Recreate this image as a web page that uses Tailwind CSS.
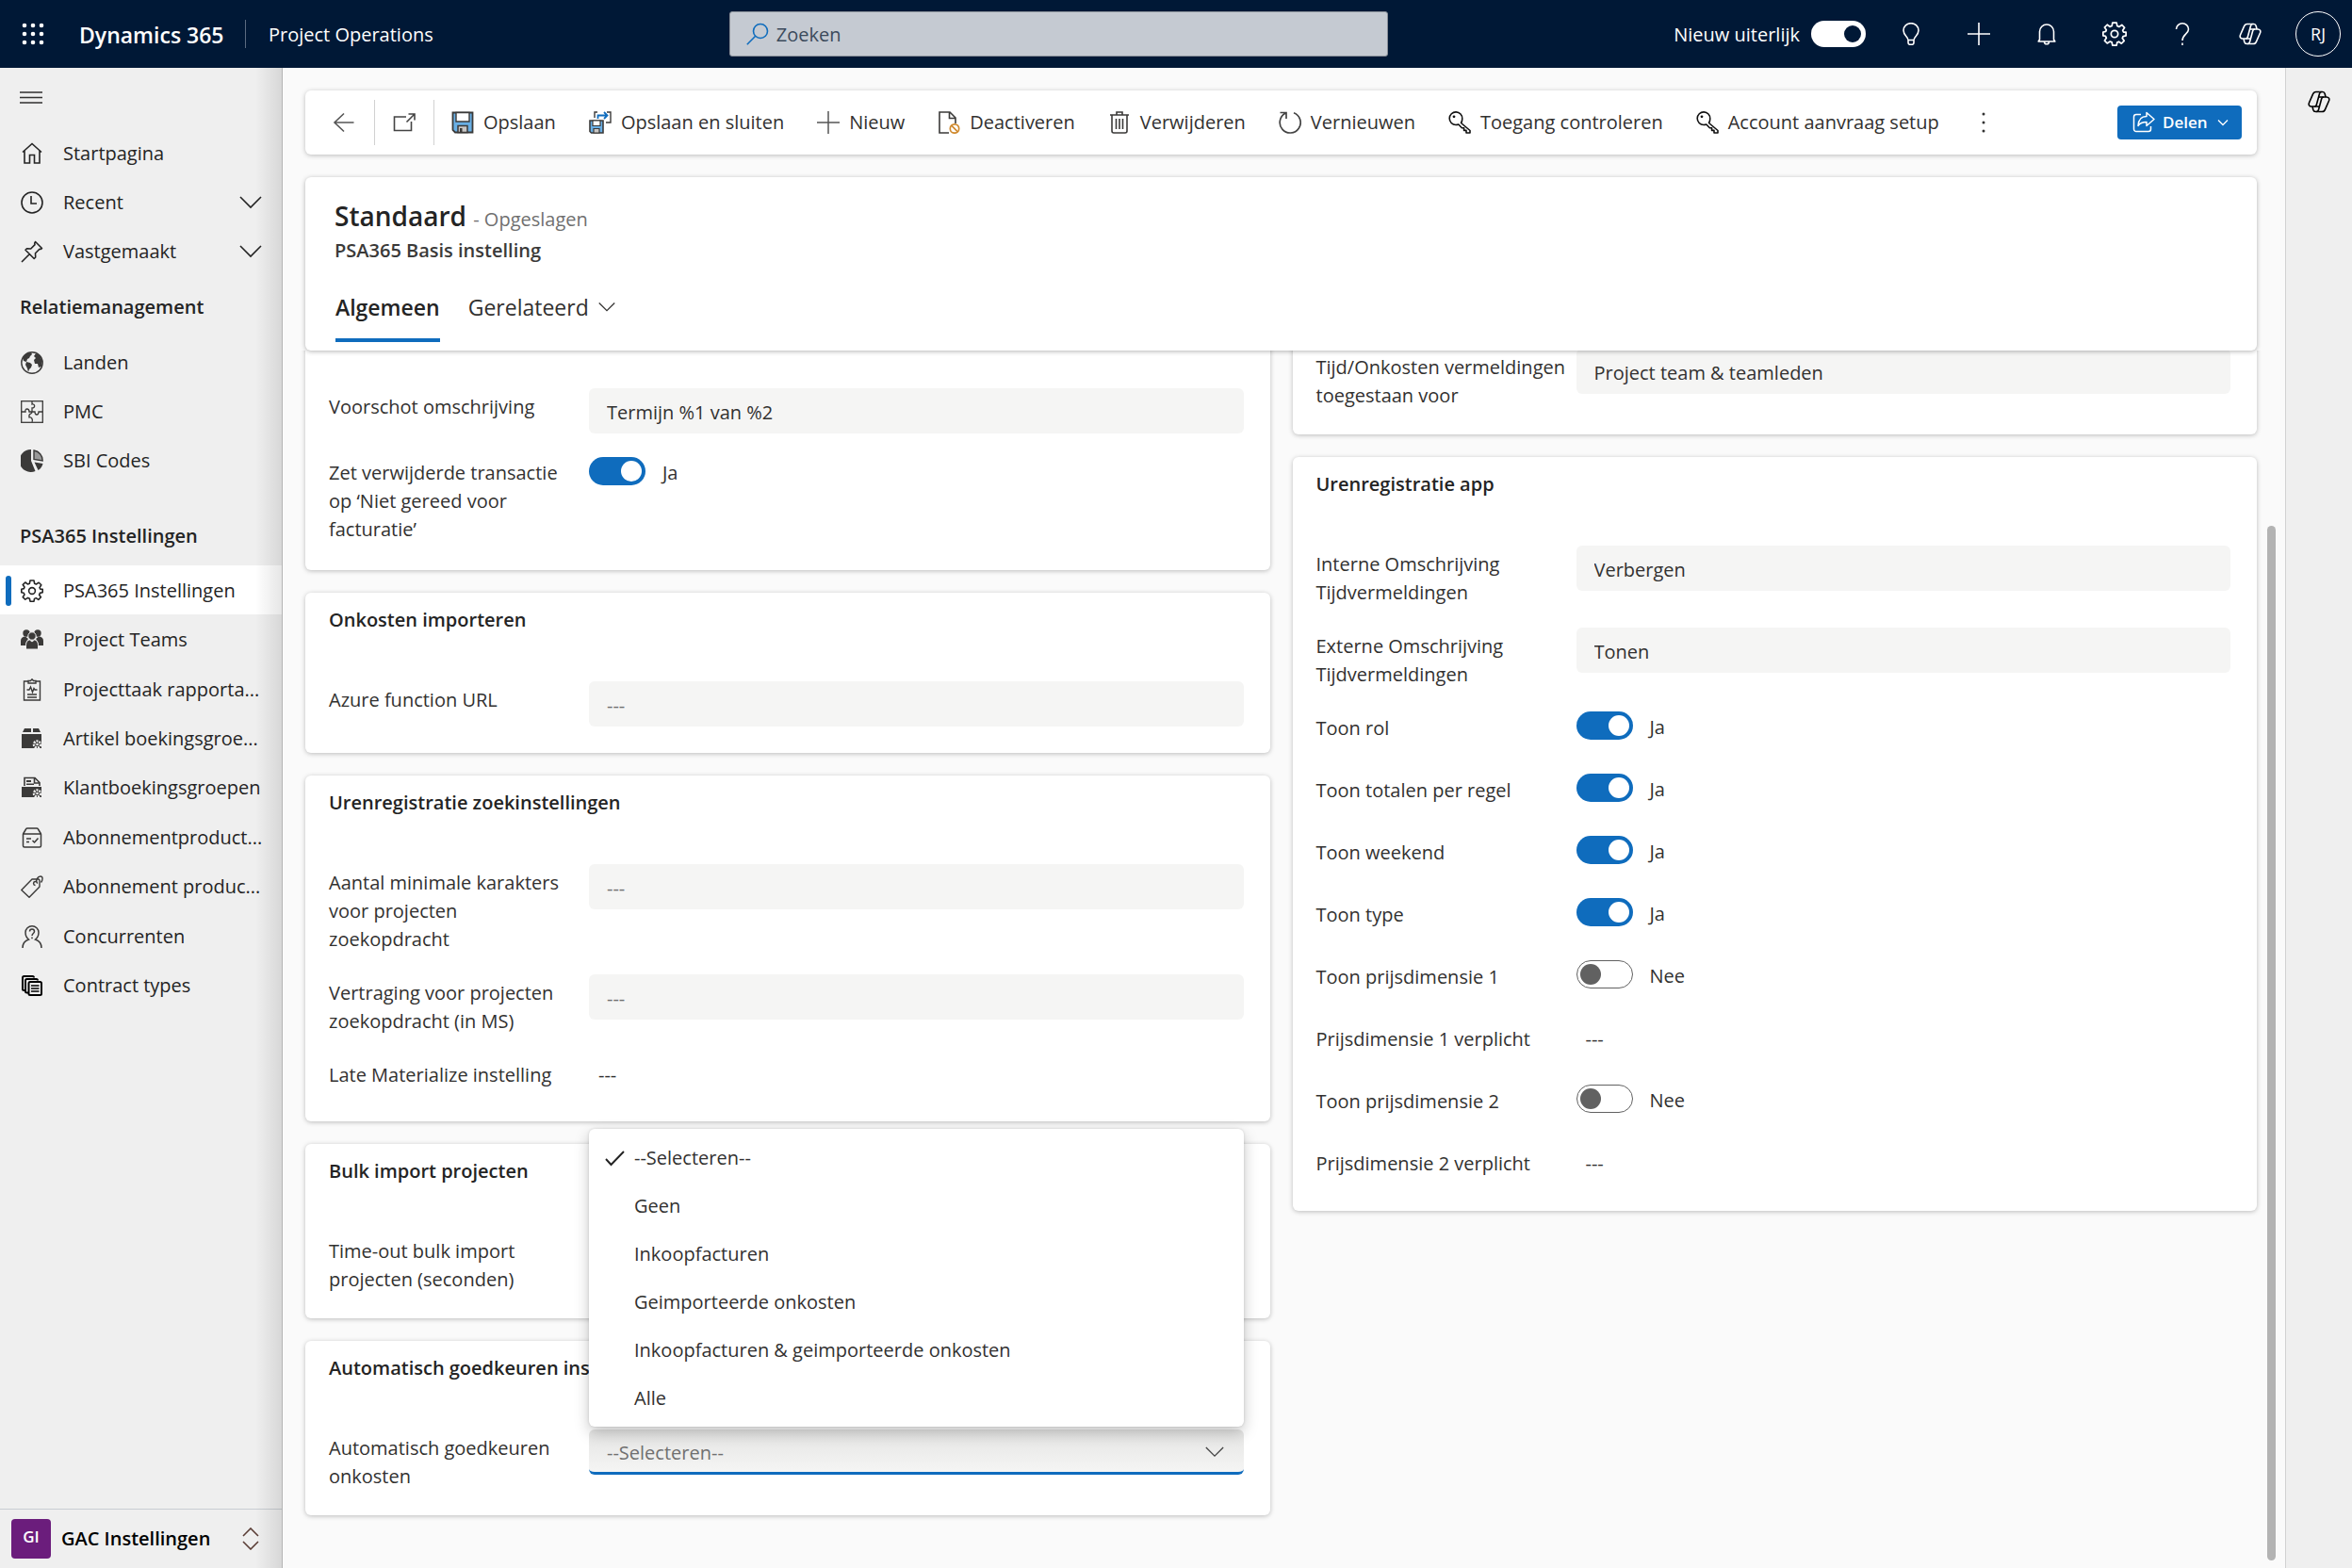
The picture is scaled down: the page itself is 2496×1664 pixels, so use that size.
<!DOCTYPE html>
<html lang="nl">
<head>
<meta charset="utf-8">
<title>PSA365 Basis instelling - Dynamics 365</title>
<script src="https://cdn.jsdelivr.net/npm/@tailwindcss/browser@4"></script>
</head>
<body class="flex h-screen flex-col overflow-hidden bg-[#fafafa] font-['Open_Sans','Noto_Sans',sans-serif] text-[20px] leading-[30px] text-[#323130]">

<svg class="hidden" aria-hidden="true">
  <defs>
    <symbol id="chev" viewBox="0 0 24 24"><path d="M1 6l11 11L23 6" fill="none" stroke="currentColor" stroke-width="1.6"/></symbol>
    <symbol id="gear" viewBox="0 0 24 24"><g fill="none" stroke="currentColor" stroke-width="1.6" stroke-linejoin="round"><path d="M10 1h4l.6 3.2 1.8.8L19.200 3.200l2.600 2.600-1.800 2.800.8 1.600L23.200 10.200v3.600l-2.800.600-.8 1.800 1.800 2.600-2.600 2.600-2.600-1.800-1.700.8L14 23.200h-4l-.6-3-1.800-.8-2.800 1.800-2.600-2.600L4 16l-.8-1.800L.8 13.800v-3.600l2.600-.600L4 8 2.200 5.600l2.600-2.600L7.400 4.900l2-.7z"/><circle cx="12" cy="12" r="3.400"/></g></symbol>
    <symbol id="copilot" viewBox="0 0 24 24"><g fill="none" stroke="currentColor" stroke-width="1.600" stroke-linejoin="round"><path d="M12.500 1.500H8.800C7.200 1.500 6.100 2.300 5.500 3.900L1.500 13c-.9 2.300.2 4 2.500 4h3c1.300 0 2-.6 2.300-1.800L12.500 3.500c.3-1.200 1-2 2.200-2"/><path d="M12.500 1.500h3.300c1.300 0 2 .7 2.400 2L19 7"/><path d="M11.500 22.500h3.700c1.600 0 2.700-.8 3.300-2.400l4-9.100c.9-2.300-.2-4-2.500-4h-3c-1.300 0-2 .6-2.300 1.800L11.500 20.500c-.3 1.200-1 2-2.200 2"/><path d="M11.500 22.500H8.200c-1.300 0-2-.7-2.400-2L5 17M17 7h-5.300M7 17h5.300"/></g></symbol>
    <symbol id="key" viewBox="0 0 24 24"><g fill="none" stroke="#111" stroke-width="1.600" stroke-linejoin="round"><path d="M13.500 12.500l9.500 8V23h-4v-2.600h-2.400v-2.600h-2.200L10.800 14C9.900 14.400 9 14.500 8 14.500A6.800 6.800 0 1 1 14.800 8c0 1.700-.5 3.200-1.300 4.500z"/></g><circle cx="6" cy="5.800" r="1.400" fill="#111"/></symbol>
  </defs>
</svg>

<header class="relative flex h-[72px] shrink-0 items-center bg-[#001836] text-white">
  <button class="ml-[23px] size-6" aria-label="Apps">
    <svg viewBox="0 0 24 24" fill="currentColor"><circle cx="3" cy="3" r="2.300"/><circle cx="12" cy="3" r="2.300"/><circle cx="21" cy="3" r="2.300"/><circle cx="3" cy="12" r="2.300"/><circle cx="12" cy="12" r="2.300"/><circle cx="21" cy="12" r="2.300"/><circle cx="3" cy="21" r="2.300"/><circle cx="12" cy="21" r="2.300"/><circle cx="21" cy="21" r="2.300"/></svg>
  </button>
  <a href="#" class="ml-[37px] w-[176px] pt-0.5 text-[23px] font-semibold whitespace-nowrap">Dynamics 365</a>
  <a href="#" class="flex h-[30px] items-center border-l border-[#5b6b80] pt-0.5 pl-6 whitespace-nowrap">Project Operations</a>
  <label class="absolute left-[31%] flex h-12 w-[28%] items-center gap-2 rounded-[3px] border border-[#8a8f98] bg-[#c5cad2] px-[17px] text-[#33475c]">
    <svg class="size-6 shrink-0" viewBox="0 0 24 24" fill="none" stroke="#0f6cbd" stroke-width="1.600"><circle cx="15" cy="9" r="7.500"/><path d="M9.700 14.300L.8 23.200"/></svg>
    <input type="search" aria-label="Zoeken" placeholder="Zoeken" class="min-w-0 flex-1 bg-transparent pt-0.5 outline-none placeholder:text-[#3b4a5c]">
  </label>
  <div class="ml-auto flex items-center pr-3">
    <label for="look" class="pt-0.5 pr-3 whitespace-nowrap">Nieuw uiterlijk</label>
    <input id="look" type="checkbox" checked class="relative h-7 w-[58px] appearance-none rounded-full bg-white before:absolute before:top-[5px] before:right-[5px] before:size-[18px] before:rounded-full before:bg-[#001836] before:content-['']">
    <div class="ml-3 flex">
      <button class="grid h-12 w-[72px] place-items-center" aria-label="Ideeën"><svg class="size-6" viewBox="0 0 24 24" fill="none" stroke="currentColor" stroke-width="1.600"><path d="M9 18.500c0-3.500-5-5-5-10.200a8 7.600 0 0 1 16 0c0 5.200-5 6.700-5 10.200zM9 18.500v2.800c0 1.200.8 2 2 2h2c1.200 0 2-.8 2-2v-2.800"/></svg></button>
      <button class="grid h-12 w-[72px] place-items-center" aria-label="Toevoegen"><svg class="size-6" viewBox="0 0 24 24" fill="none" stroke="currentColor" stroke-width="1.600"><path d="M12 0v24M0 12h24"/></svg></button>
      <button class="grid h-12 w-[72px] place-items-center" aria-label="Meldingen"><svg class="size-6" viewBox="0 0 24 24" fill="none" stroke="currentColor" stroke-width="1.600" stroke-linejoin="round"><path d="M4.500 18V9.500a7.500 7.500 0 0 1 15 0V18l1.300 2H3.200zM9.500 20.500a2.500 2.300 0 0 0 5 0"/></svg></button>
      <button class="grid h-12 w-[72px] place-items-center" aria-label="Instellingen"><svg class="size-[26px]"><use href="#gear"/></svg></button>
      <button class="grid h-12 w-[72px] place-items-center" aria-label="Help"><svg class="size-6" viewBox="0 0 24 24" fill="none" stroke="currentColor" stroke-width="1.600"><path d="M5.500 7a6.500 6.200 0 0 1 13 0c0 5-6.500 5.500-6.500 12M12 21.500V24"/></svg></button>
      <button class="grid h-12 w-[72px] place-items-center" aria-label="Copilot"><svg class="size-6"><use href="#copilot"/></svg></button>
    </div>
    <button class="ml-3 grid size-12 place-items-center rounded-full border border-white text-[18px]">RJ</button>
  </div>
</header>

<div class="flex min-h-0 flex-1">
  <nav class="relative flex w-[300px] shrink-0 flex-col border-r border-[#b4b4b4] bg-[#efefef] text-[#242424]">
    <div class="pointer-events-none absolute inset-y-0 right-0 z-10 w-7 bg-linear-to-r from-transparent to-black/10"></div>
    <button class="flex h-16 items-center pl-[21px]" aria-label="Menu"><svg class="size-6" viewBox="0 0 24 24" stroke="#323130" stroke-width="1.500"><path d="M0 6h24M0 11.500h24M0 17h24"/></svg></button>

    <ul class="grid h-[157px] auto-rows-fr">
      <li><a href="#" class="flex h-full items-center gap-[21px] pt-px pl-[22px]"><svg class="size-6 shrink-0" viewBox="0 0 24 24" fill="none" stroke="currentColor" stroke-width="1.600"><path d="M2 10.500L12 1.500l10 9M4 9v13h5.500v-8.500h5V22H20V9"/></svg>Startpagina</a></li>
      <li><button class="flex h-full w-full items-center gap-[21px] pt-px pl-[22px]"><svg class="size-6 shrink-0" viewBox="0 0 24 24" fill="none" stroke="currentColor" stroke-width="1.600"><circle cx="12" cy="12" r="11"/><path d="M11 5v8h6"/></svg>Recent<svg class="mr-[21px] ml-auto size-6"><use href="#chev"/></svg></button></li>
      <li><button class="flex h-full w-full items-center gap-[21px] pt-px pl-[22px]"><svg class="size-6 shrink-0" viewBox="0 0 24 24" fill="none" stroke="currentColor" stroke-width="1.600" stroke-linejoin="round"><path d="M15.500 1.500l7 7-1.500 1-1-.2-4.500 4.500.2 4.200-1.500 1.500L5 10.300l1.500-1.500 4.200.2L15 4.600l-.3-1.500zM9.500 14.500L1 23"/></svg>Vastgemaakt<svg class="mr-[21px] ml-auto size-6"><use href="#chev"/></svg></button></li>
    </ul>

    <h2 class="flex h-[65px] items-center pl-[21px] font-semibold">Relatiemanagement</h2>
    <ul class="grid h-[157px] auto-rows-fr">
      <li><a href="#" class="flex h-full items-center gap-[21px] pt-px pl-[22px]"><svg class="size-6 shrink-0" viewBox="0 0 24 24"><circle cx="12" cy="12" r="11.200" fill="none" stroke="#3b3a39" stroke-width="1.400"/><path fill="#3b3a39" d="M2 7c2-4 5-6 9-6l1 2-2 2-1 2-2 1-1 3-3-1zM6 11l4 1 2 2-1 3-2 2-1 3-1-4-2-4zM14 5l2-3 4 2 3 6-1 6-3 1-1-4-3 0-1-4 2-2z"/></svg>Landen</a></li>
      <li><a href="#" class="flex h-full items-center gap-[21px] pt-px pl-[22px]"><svg class="size-6 shrink-0" viewBox="0 0 24 24" fill="none" stroke="#3b3a39" stroke-width="1.300"><rect x=".7" y=".7" width="22.600" height="22.600"/><path d="M12 1v3c3-1 4 4 0 4v4c0 4-4 0-3 6 3-1 4 3 3 5M1 12h4c-1-4 4-4 4 0h6c0 4 4 4 4 0h4"/></svg>PMC</a></li>
      <li><a href="#" class="flex h-full items-center gap-[21px] pt-px pl-[22px]"><svg class="size-6 shrink-0" viewBox="0 0 24 24" fill="#3b3a39"><path d="M11 0v12l4.500 11A12 12 0 1 1 11 0z"/><path d="M14 1a11 11 0 0 1 9.200 11L14 10.500z" fill="#999" stroke="#3b3a39" stroke-width="1.400"/><path d="M14.500 13.500l9 1.500a11 11 0 0 1-5 7z"/></svg>SBI Codes</a></li>
    </ul>

    <h2 class="flex h-[85px] items-center pt-[23px] pl-[21px] font-semibold">PSA365 Instellingen</h2>
    <ul class="grid h-[472px] auto-rows-fr">
      <li><a href="#" aria-current="page" class="relative flex h-full items-center gap-[21px] bg-white pt-px pl-[22px] before:absolute before:left-1.5 before:h-8 before:w-1.5 before:rounded-sm before:bg-[#0f6cbd] before:content-['']"><svg class="size-6 shrink-0"><use href="#gear"/></svg>PSA365 Instellingen</a></li>
      <li><a href="#" class="flex h-full items-center gap-[21px] pt-px pl-[22px]"><svg class="size-6 shrink-0" viewBox="0 0 24 24" fill="#3b3a39"><circle cx="6" cy="5" r="3.700"/><circle cx="18" cy="5" r="3.700"/><path d="M0 18v-5c0-3 2-4.500 5-4.500L8 11c-2 2-2.500 4-2.500 7zM24 18v-5c0-3-2-4.500-5-4.500L16 11c2 2 2.500 4 2.500 7z"/><g stroke="#efefef"><circle cx="12" cy="8" r="4.200"/><path d="M5.500 22v-4.500c0-3.500 2-5.500 4-5.500l2.500 2 2.500-2c2 0 4 2 4 5.500V22z"/></g></svg>Project Teams</a></li>
      <li><a href="#" class="flex h-full items-center gap-[21px] pt-px pl-[22px]"><svg class="size-6 shrink-0" viewBox="0 0 24 24" fill="none" stroke="#3b3a39" stroke-width="1.400"><path d="M8 3H3.500v20h17V3H16M8 5V2.500h2.500L12 .8l1.500 1.700H16V5zM6.500 12H9l1.500-3 2 5.500 1.500-4 1 1.500h2.500M7 17h10M7 20h10"/></svg>Projecttaak rapporta...</a></li>
      <li><a href="#" class="flex h-full items-center gap-[21px] pt-px pl-[22px]"><svg class="size-6 shrink-0" viewBox="0 0 24 24" fill="#3b3a39"><path d="M4 1h7v4H2zM13 1h6l2 4h-8zM1 7h21v15H1z"/><circle cx="17.500" cy="18" r="3.500" fill="#3b3a39" stroke="#efefef" stroke-width="2.500" stroke-dasharray="2 1"/><circle cx="17.500" cy="18" r="1.300" fill="#efefef"/></svg>Artikel boekingsgroe...</a></li>
      <li><a href="#" class="flex h-full items-center gap-[21px] pt-px pl-[22px]"><svg class="size-6 shrink-0" viewBox="0 0 24 24" fill="#3b3a39"><path d="M4 10V1.500h11l5 5V10M14.500 1.500V7H20" fill="none" stroke="#3b3a39" stroke-width="1.600"/><path d="M6 4h5v2H6zM6 7.500h8V9H6zM1 11h21v11H1z"/><circle cx="17.500" cy="18" r="3.500" fill="#3b3a39" stroke="#efefef" stroke-width="2.500" stroke-dasharray="2 1"/><circle cx="17.500" cy="18" r="1.300" fill="#efefef"/></svg>Klantboekingsgroepen</a></li>
      <li><a href="#" class="flex h-full items-center gap-[21px] pt-px pl-[22px]"><svg class="size-6 shrink-0" viewBox="0 0 24 24" fill="none" stroke="#3b3a39" stroke-width="1.500" stroke-linejoin="round"><path d="M2.500 8h19v12.500c0 1-.5 1.500-1.500 1.500H4c-1 0-1.500-.5-1.500-1.500zL5.500 3c.3-.6.700-1 1.500-1h10c.8 0 1.200.4 1.500 1l3 5M6 13h5M6 16.500h3M12.500 15l2 2 4-4.500"/></svg>Abonnementproduct...</a></li>
      <li><a href="#" class="flex h-full items-center gap-[21px] pt-px pl-[22px]"><svg class="size-6 shrink-0" viewBox="0 0 24 24" fill="none" stroke="#3b3a39" stroke-width="1.400" stroke-linejoin="round"><path d="M12 4h7l1 1v7L9 23.300.8 15.500zM15.500 10.500a2 2 0 1 1 2-2.500c-2-3 .5-7 3.500-7 2.500 0 2.800 3.500.5 6.500"/></svg>Abonnement produc...</a></li>
      <li><a href="#" class="flex h-full items-center gap-[21px] pt-px pl-[22px]"><svg class="size-6 shrink-0" viewBox="0 0 24 24" fill="none" stroke="#3b3a39" stroke-width="1.500"><path d="M2 24c0-5 2-7.500 6.500-9C6 13 5 10.500 5 7.500a7 6.700 0 0 1 14 0c0 3-1 5.500-3.500 7.500 4.500 1.500 6.500 4 6.500 9M9.500 6.500c0-3.500 5-3.500 5 0 0 2-2.500 2-2.500 4.500M12 12.500v1.800"/></svg>Concurrenten</a></li>
      <li><a href="#" class="flex h-full items-center gap-[21px] pt-px pl-[22px]"><svg class="size-6 shrink-0" viewBox="0 0 24 24" fill="none" stroke="#000" stroke-width="2" stroke-linejoin="round"><path d="M5 17H3.500C2.500 17 2 16.500 2 15.500v-12C2 2.500 2.500 2 3.500 2h9c1 0 1.500.5 1.500 1.500M8 19.500H6.500c-1 0-1.500-.5-1.500-1.500V6.500C5 5.500 5.500 5 6.500 5h10c1 0 1.500.5 1.500 1.500"/><rect x="8.500" y="8" width="13.500" height="14" rx="1.500"/><path d="M11 12h8.500M11 15h8.500M11 18h8.500" stroke-width="1.500"/></svg>Contract types</a></li>
    </ul>

    <button class="mt-auto flex h-[63px] items-center border-t border-[#c8cdd2] pl-3 text-black">
      <span class="grid size-[42px] place-items-center rounded bg-[#6b1d7c] pb-1 text-[17px] leading-6 font-semibold text-white">GI</span>
      <span class="ml-[11px] font-semibold">GAC Instellingen</span>
      <svg class="mr-[21px] ml-auto size-6" viewBox="0 0 24 24" fill="none" stroke="#5a3d36" stroke-width="1.600"><path d="M4 9l8-8 8 8M4 15l8 8 8-8"/></svg>
    </button>
  </nav>

  <main class="relative flex min-w-0 flex-1 flex-col px-6 pt-6 pr-[30px]">
    <div role="toolbar" class="flex h-[68px] shrink-0 items-center rounded-md bg-white pr-4 whitespace-nowrap shadow-[0_1px_5px_rgba(0,0,0,0.25)]">
      <button class="grid h-12 w-[74px] place-items-center border-r border-[#d1d1d1] pl-2" aria-label="Terug"><svg class="size-6" viewBox="0 0 24 24" fill="none" stroke="#555" stroke-width="1.600"><path d="M12 2.500L2 12l10 9.500M2 12h20.500"/></svg></button>
      <button class="grid h-12 w-[63px] place-items-center border-r border-[#d1d1d1]" aria-label="Openen in nieuw venster"><svg class="size-6" viewBox="0 0 24 24" fill="none" stroke="#444" stroke-width="1.600"><path d="M14 6H1.500v14.500h18V11M14.500 11.500L23 3M16.500 3H23v6.500"/></svg></button>
      <button class="ml-[18px] flex items-center gap-2.5"><svg class="size-6" viewBox="0 0 24 24"><path d="M1.500 1.500h21v21H4l-2.500-2.500z" fill="#69afe5" stroke="#3b3a39" stroke-width="1.800"/><path d="M5 1.500h14V11H5z" fill="#fff" stroke="#3b3a39" stroke-width="1.400"/><path d="M7 22.500V15.500h10v7z" fill="#c8c6c4" stroke="#3b3a39" stroke-width="1.500"/><path d="M9 18h2.500v4.500H9z" fill="#3b3a39"/></svg>Opslaan</button>
      <button class="ml-[35px] flex items-center gap-2.5"><svg class="size-6" viewBox="0 0 24 24"><path d="M1 10h14v13H2.500L1 21.500z" fill="#69afe5" stroke="#3b3a39" stroke-width="1.600"/><path d="M4 10h8v5.500H4z" fill="#fff" stroke="#3b3a39" stroke-width="1.200"/><path d="M5 23v-4.500h6V23z" fill="#c8c6c4" stroke="#3b3a39" stroke-width="1.200"/><path d="M9 1H6v6M19 1h4v11h-5" fill="none" stroke="#3b3a39" stroke-width="1.400"/><path d="M9.500 8V4.500H19M16 1l3.500 3.500L16 8" fill="none" stroke="#0f6cbd" stroke-width="1.800"/></svg>Opslaan en sluiten</button>
      <button class="ml-[35px] flex items-center gap-2.5"><svg class="size-6" viewBox="0 0 24 24" stroke="#555" stroke-width="1.500"><path d="M12 0v24M0 12h24"/></svg>Nieuw</button>
      <button class="ml-[35px] flex items-center gap-2.5"><svg class="size-6" viewBox="0 0 24 24" fill="none" stroke="#3b3a39" stroke-width="1.600"><path d="M12 23H2V1h11l6 6v6M12.500 1v6.500H19"/><g stroke="#d08a2e" stroke-width="1.700"><circle cx="18" cy="18.500" r="4.700"/><path d="M14.700 15.200l6.600 6.600"/></g></svg>Deactiveren</button>
      <button class="ml-[35px] flex items-center gap-2.5"><svg class="size-6" viewBox="0 0 24 24" fill="none" stroke="#3b3a39" stroke-width="1.600"><path d="M2 4h20M9 4V1h6v3M4 4v17c0 1.500.6 2 2 2h12c1.400 0 2-.5 2-2V4M8.500 8v11M12 8v11M15.500 8v11"/></svg>Verwijderen</button>
      <button class="ml-[35px] flex items-center gap-2.5"><svg class="size-6" viewBox="0 0 24 24" fill="none" stroke="#444" stroke-width="1.700"><path d="M16 1.700A11 11 0 1 1 7 2.300M1.500 1.500h6.500V8"/></svg>Vernieuwen</button>
      <button class="ml-[35px] flex items-center gap-2.5"><svg class="size-6"><use href="#key"/></svg>Toegang controleren</button>
      <button class="ml-[35px] flex items-center gap-2.5"><svg class="size-6"><use href="#key"/></svg>Account aanvraag setup</button>
      <button class="ml-[35px] size-6" aria-label="Meer opdrachten"><svg viewBox="0 0 24 24" fill="#333"><circle cx="12" cy="3" r="1.500"/><circle cx="12" cy="12" r="1.500"/><circle cx="12" cy="21" r="1.500"/></svg></button>
      <button class="ml-auto flex h-9 w-[132px] items-center rounded bg-[#0f6cbd] pl-4 text-[17px] font-semibold text-white"><svg class="size-6" viewBox="0 0 24 24" fill="none" stroke="currentColor" stroke-width="1.500" stroke-linejoin="round"><path d="M9 3.500H4A2.500 2.500 0 0 0 1.500 6v13A2.500 2.500 0 0 0 4 21.500h13a2.500 2.500 0 0 0 2.500-2.500v-3M15 1.500l8 7-8 7v-4c-4 0-7 1-9 4 .3-6 3.500-10 9-10z"/></svg><span class="ml-2">Delen</span><svg class="ml-2.5 size-3" viewBox="0 0 12 12" fill="none" stroke="currentColor" stroke-width="1.300"><path d="M1 3.500l5 5 5-5"/></svg></button>
    </div>

    <section class="relative z-10 mt-6 h-[184px] shrink-0 rounded-md bg-white px-[31px] pt-[23px] shadow-[0_1px_5px_rgba(0,0,0,0.3)]">
      <h1 class="text-[28px] leading-9 font-semibold text-[#242424]">Standaard <span class="text-[20px] font-normal text-[#707070]">- Opgeslagen</span></h1>
      <p class="font-semibold text-[#3b3a39]">PSA365 Basis instelling</p>
      <div role="tablist" class="mt-[21px] flex gap-[30px] pl-px text-[23px]">
        <button role="tab" aria-selected="true" class="h-[61px] border-b-4 border-[#0f6cbd] pb-2.5 font-semibold text-[#242424]">Algemeen</button>
        <button role="tab" class="flex h-[61px] items-center gap-2.5 pb-3.5">Gerelateerd<svg class="size-[18px]"><use href="#chev"/></svg></button>
      </div>
    </section>

    <div class="grid min-h-0 flex-1 grid-cols-2 items-start gap-6 overflow-hidden px-1.5 -mx-1.5 [&_label]:pt-[5px] [&_label]:whitespace-nowrap [&_span]:pt-0.5">
      <div class="-mt-6 flex flex-col gap-6">
        <section class="rounded-md bg-white pt-16 pr-7 pb-7 pl-[25px] shadow-[0_1px_5px_rgba(0,0,0,0.25)]">
          <div class="grid grid-cols-[276px_1fr] items-start gap-y-[22px]">
            <label for="f1">Voorschot omschrijving</label>
            <input id="f1" readonly value="Termijn %1 van %2" class="h-12 w-full rounded-md bg-[#f5f5f4] px-[19px] pt-0.5 outline-none">
            <label for="f2">Zet verwijderde transactie<br>op ‘Niet gereed voor<br>facturatie’</label>
            <div class="flex min-h-11 items-start gap-[18px] pt-[3px]"><input id="f2" type="checkbox" checked class="relative h-[30px] w-[60px] appearance-none rounded-full bg-[#0f6cbd] before:absolute before:top-1 before:right-1 before:size-[22px] before:rounded-full before:bg-white before:content-['']"><span>Ja</span></div>
          </div>
        </section>

        <section class="rounded-md bg-white pt-3.5 pr-7 pb-7 pl-[25px] shadow-[0_1px_5px_rgba(0,0,0,0.25)]">
          <h2 class="mb-[50px] font-semibold text-[#242424]">Onkosten importeren</h2>
          <div class="grid grid-cols-[276px_1fr] items-start gap-y-[22px]">
            <label for="f3">Azure function URL</label>
            <input id="f3" placeholder="---" class="h-12 w-full rounded-md bg-[#f5f5f4] px-[19px] pt-0.5 outline-none placeholder:text-[#707070]">
          </div>
        </section>

        <section class="rounded-md bg-white pt-3.5 pr-7 pb-[25px] pl-[25px] shadow-[0_1px_5px_rgba(0,0,0,0.25)]">
          <h2 class="mb-[50px] font-semibold text-[#242424]">Urenregistratie zoekinstellingen</h2>
          <div class="grid grid-cols-[276px_1fr] items-start gap-y-[22px]">
            <label for="f4">Aantal minimale karakters<br>voor projecten<br>zoekopdracht</label>
            <input id="f4" placeholder="---" class="h-12 w-full rounded-md bg-[#f5f5f4] px-[19px] pt-0.5 outline-none placeholder:text-[#707070]">
            <label for="f5">Vertraging voor projecten<br>zoekopdracht (in MS)</label>
            <input id="f5" placeholder="---" class="h-12 w-full rounded-md bg-[#f5f5f4] px-[19px] pt-0.5 outline-none placeholder:text-[#707070]">
            <label for="f6">Late Materialize instelling</label>
            <output id="f6" class="block h-11 pt-[5px] pl-2.5">---</output>
          </div>
        </section>

        <section class="rounded-md bg-white pt-3.5 pr-7 pb-[26px] pl-[25px] shadow-[0_1px_5px_rgba(0,0,0,0.25)]">
          <h2 class="mb-[50px] font-semibold text-[#242424]">Bulk import projecten</h2>
          <div class="grid grid-cols-[276px_1fr] items-start gap-y-[22px]">
            <label for="f7">Time-out bulk import<br>projecten (seconden)</label>
            <input id="f7" class="h-12 w-full rounded-md bg-[#f5f5f4] px-[19px] pt-0.5 outline-none">
          </div>
        </section>

        <section class="rounded-md bg-white pt-3.5 pr-7 pb-[26px] pl-[25px] shadow-[0_1px_5px_rgba(0,0,0,0.25)]">
          <h2 class="mb-[50px] font-semibold whitespace-nowrap text-[#242424]">Automatisch goedkeuren inst</h2>
          <div class="grid grid-cols-[276px_1fr] items-start gap-y-[22px]">
            <label for="f8">Automatisch goedkeuren<br>onkosten</label>
            <div class="relative">
              <select id="f8" class="h-12 w-full appearance-none rounded-md border-b-[3px] border-[#0f6cbd] bg-linear-to-b from-[#e4e4e3] to-[#f5f5f4] px-[19px] pt-1 text-[#707070] outline-none"><option>--Selecteren--</option></select>
              <svg class="pointer-events-none absolute top-3.5 right-[21px] size-5 text-[#444]"><use href="#chev"/></svg>
              <ul role="listbox" class="absolute inset-x-0 bottom-full z-10 mb-[3px] rounded-md bg-white py-[5px] shadow-[0_6px_16px_rgba(0,0,0,0.22),0_0_3px_rgba(0,0,0,0.15)]">
                <li role="option" aria-selected="true" class="flex h-[51px] items-center gap-[10px] pt-px pl-[17px]"><svg class="size-[21px]" viewBox="0 0 21 21" fill="none" stroke="#222" stroke-width="1.900"><path d="M1 11l5.500 6L20 3"/></svg>--Selecteren--</li>
                <li role="option" class="flex h-[51px] items-center pt-px pl-12">Geen</li>
                <li role="option" class="flex h-[51px] items-center pt-px pl-12">Inkoopfacturen</li>
                <li role="option" class="flex h-[51px] items-center pt-px pl-12">Geimporteerde onkosten</li>
                <li role="option" class="flex h-[51px] items-center pt-px pl-12">Inkoopfacturen &amp; geimporteerde onkosten</li>
                <li role="option" class="flex h-[51px] items-center pt-px pl-12">Alle</li>
              </ul>
            </div>
          </div>
        </section>
      </div>

      <div class="-mt-6 flex flex-col gap-6">
        <section class="rounded-md bg-white pt-[22px] pr-7 pb-[26px] pl-[25px] shadow-[0_1px_5px_rgba(0,0,0,0.25)]">
          <div class="grid grid-cols-[276px_1fr] items-start gap-y-[22px]">
            <label for="g1">Tijd/Onkosten vermeldingen<br>toegestaan voor</label>
            <select id="g1" class="h-12 w-full appearance-none rounded-md bg-[#f5f5f4] px-[19px] pt-1 outline-none"><option>Project team &amp; teamleden</option></select>
          </div>
        </section>

        <section class="rounded-md bg-white pt-3.5 pr-7 pb-[26px] pl-[25px] shadow-[0_1px_5px_rgba(0,0,0,0.25)]">
          <h2 class="mb-[50px] font-semibold text-[#242424]">Urenregistratie app</h2>
          <div class="grid grid-cols-[276px_1fr] items-start gap-y-[22px]">
            <label for="g2">Interne Omschrijving<br>Tijdvermeldingen</label>
            <select id="g2" class="h-12 w-full appearance-none rounded-md bg-[#f5f5f4] px-[19px] pt-1 outline-none"><option>Verbergen</option></select>
            <label for="g3">Externe Omschrijving<br>Tijdvermeldingen</label>
            <select id="g3" class="h-12 w-full appearance-none rounded-md bg-[#f5f5f4] px-[19px] pt-1 outline-none"><option>Tonen</option></select>
            <label for="g4">Toon rol</label>
            <div class="flex h-11 items-start gap-[18px] pt-0.5"><input id="g4" type="checkbox" checked class="relative h-[30px] w-[60px] appearance-none rounded-full bg-[#0f6cbd] before:absolute before:top-1 before:right-1 before:size-[22px] before:rounded-full before:bg-white before:content-['']"><span>Ja</span></div>
            <label for="g5">Toon totalen per regel</label>
            <div class="flex h-11 items-start gap-[18px] pt-0.5"><input id="g5" type="checkbox" checked class="relative h-[30px] w-[60px] appearance-none rounded-full bg-[#0f6cbd] before:absolute before:top-1 before:right-1 before:size-[22px] before:rounded-full before:bg-white before:content-['']"><span>Ja</span></div>
            <label for="g6">Toon weekend</label>
            <div class="flex h-11 items-start gap-[18px] pt-0.5"><input id="g6" type="checkbox" checked class="relative h-[30px] w-[60px] appearance-none rounded-full bg-[#0f6cbd] before:absolute before:top-1 before:right-1 before:size-[22px] before:rounded-full before:bg-white before:content-['']"><span>Ja</span></div>
            <label for="g7">Toon type</label>
            <div class="flex h-11 items-start gap-[18px] pt-0.5"><input id="g7" type="checkbox" checked class="relative h-[30px] w-[60px] appearance-none rounded-full bg-[#0f6cbd] before:absolute before:top-1 before:right-1 before:size-[22px] before:rounded-full before:bg-white before:content-['']"><span>Ja</span></div>
            <label for="g8">Toon prijsdimensie 1</label>
            <div class="flex h-11 items-start gap-[18px] pt-0.5"><input id="g8" type="checkbox" class="relative h-[30px] w-[60px] appearance-none rounded-full border border-[#616161] bg-white before:absolute before:top-[3px] before:left-[3px] before:size-[22px] before:rounded-full before:bg-[#616161] before:content-['']"><span>Nee</span></div>
            <label for="g9">Prijsdimensie 1 verplicht</label>
            <output id="g9" class="block h-11 pt-[5px] pl-2.5">---</output>
            <label for="g10">Toon prijsdimensie 2</label>
            <div class="flex h-11 items-start gap-[18px] pt-0.5"><input id="g10" type="checkbox" class="relative h-[30px] w-[60px] appearance-none rounded-full border border-[#616161] bg-white before:absolute before:top-[3px] before:left-[3px] before:size-[22px] before:rounded-full before:bg-[#616161] before:content-['']"><span>Nee</span></div>
            <label for="g11">Prijsdimensie 2 verplicht</label>
            <output id="g11" class="block h-11 pt-[5px] pl-2.5">---</output>
          </div>
        </section>
      </div>
    </div>

    <div class="absolute right-2.5 bottom-2 h-[69%] w-[9px] rounded-full bg-[#b3b3b3]"></div>
  </main>

  <aside class="flex w-[71px] shrink-0 flex-col items-center border-l border-[#d1d1d1] bg-[#efefef] pt-6 text-black">
    <button class="size-6" aria-label="Copilot"><svg class="size-6"><use href="#copilot"/></svg></button>
  </aside>
</div>
</body>
</html>
